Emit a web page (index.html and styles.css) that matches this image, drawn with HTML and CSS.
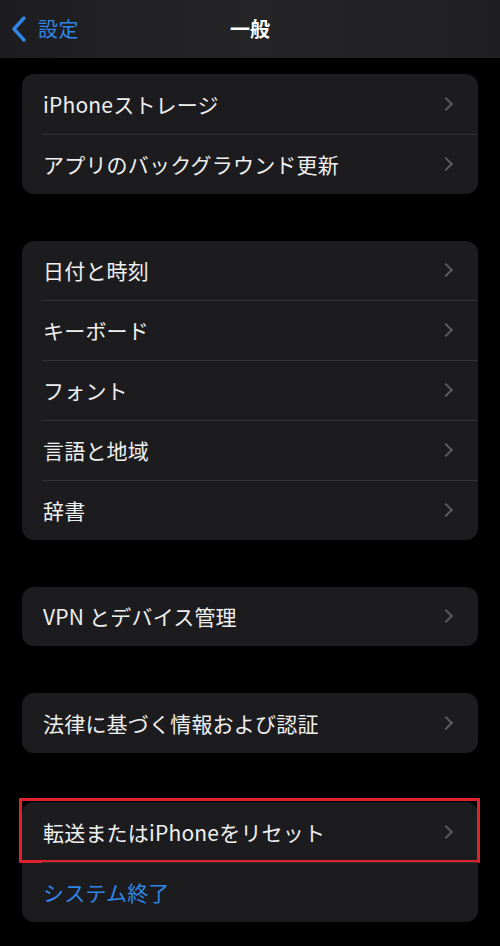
FILE: index.html
```html
<!DOCTYPE html>
<html lang="ja">
<head>
<meta charset="utf-8">
<link rel="stylesheet" href="styles.css">
</head>
<body>
<header class="nav">
  <div class="back">
    <svg class="back-icon" width="16" height="26" viewBox="0 0 16 26"><path d="M13 2 L3 13 L13 24" fill="none" stroke="#2f86e6" stroke-width="3.4" stroke-linecap="round" stroke-linejoin="round"/></svg>
    <span class="back-label">設定</span>
  </div>
  <div class="title">一般</div>
</header>
<main class="content">
  <section class="group">
    <div class="row"><span class="label">iPhoneストレージ</span><span class="chev"></span></div>
    <div class="row"><span class="label">アプリのバックグラウンド更新</span><span class="chev"></span></div>
  </section>
  <section class="group">
    <div class="row"><span class="label">日付と時刻</span><span class="chev"></span></div>
    <div class="row"><span class="label">キーボード</span><span class="chev"></span></div>
    <div class="row"><span class="label">フォント</span><span class="chev"></span></div>
    <div class="row"><span class="label">言語と地域</span><span class="chev"></span></div>
    <div class="row"><span class="label">辞書</span><span class="chev"></span></div>
  </section>
  <section class="group">
    <div class="row"><span class="label">VPN とデバイス管理</span><span class="chev"></span></div>
  </section>
  <section class="group">
    <div class="row"><span class="label">法律に基づく情報および認証</span><span class="chev"></span></div>
  </section>
  <section class="group last">
    <div class="row highlighted"><span class="label">転送またはiPhoneをリセット</span><span class="chev"></span><span class="mark"></span></div>
    <div class="row"><span class="label link">システム終了</span></div>
  </section>
</main>
</body>
</html>
```
FILE: styles.css
```css
* { box-sizing: border-box; }
html, body {
  margin: 0;
  padding: 0;
  background: #000;
  width: 500px;
  height: 946px;
  overflow: hidden;
  font-family: "Noto Sans CJK JP", "Noto Sans", sans-serif;
  color: #f2f2f2;
}
.nav {
  height: 58px;
  background: linear-gradient(90deg, #1d1d1f 0%, #252527 50%, #1f1f21 100%);
  display: flex;
  align-items: center;
  justify-content: center;
  position: relative;
}
.back {
  position: absolute;
  left: 11px;
  top: 16px;
  display: flex;
  align-items: center;
  gap: 11px;
}
.back-label {
  color: #2f86e6;
  font-size: 20px;
  line-height: 26px;
  letter-spacing: 0.5px;
}
.title {
  font-size: 20px;
  font-weight: 700;
  color: #fff;
  margin-top: -2px;
}
.content {
  padding: 16px 22px 0 22px;
  display: flex;
  flex-direction: column;
  gap: 47px;
}
.group {
  background: #1c1c1e;
  border-radius: 12px;
}
.group.last { margin-top: 2px; }
.row {
  height: 59.8px;
  display: flex;
  align-items: center;
  justify-content: space-between;
  padding: 0 22px 0 21px;
  position: relative;
}
.row + .row::before {
  content: "";
  position: absolute;
  top: 0;
  left: 20px;
  right: 0;
  height: 1px;
  background: #323234;
}
.label {
  font-size: 21px;
  letter-spacing: 0.2px;
  color: #f0f0f0;
  font-weight: 400;
}
.label.link { color: #2f86e6; }
.chev {
  width: 10px;
  height: 10px;
  border-top: 2.6px solid #5c5c60;
  border-right: 2.6px solid #5c5c60;
  transform: rotate(45deg);
  margin-right: 5px;
}
.mark {
  position: absolute;
  top: -4px;
  left: -3px;
  right: -2px;
  bottom: -1px;
  border: 3px solid #e0222c;
}
```
